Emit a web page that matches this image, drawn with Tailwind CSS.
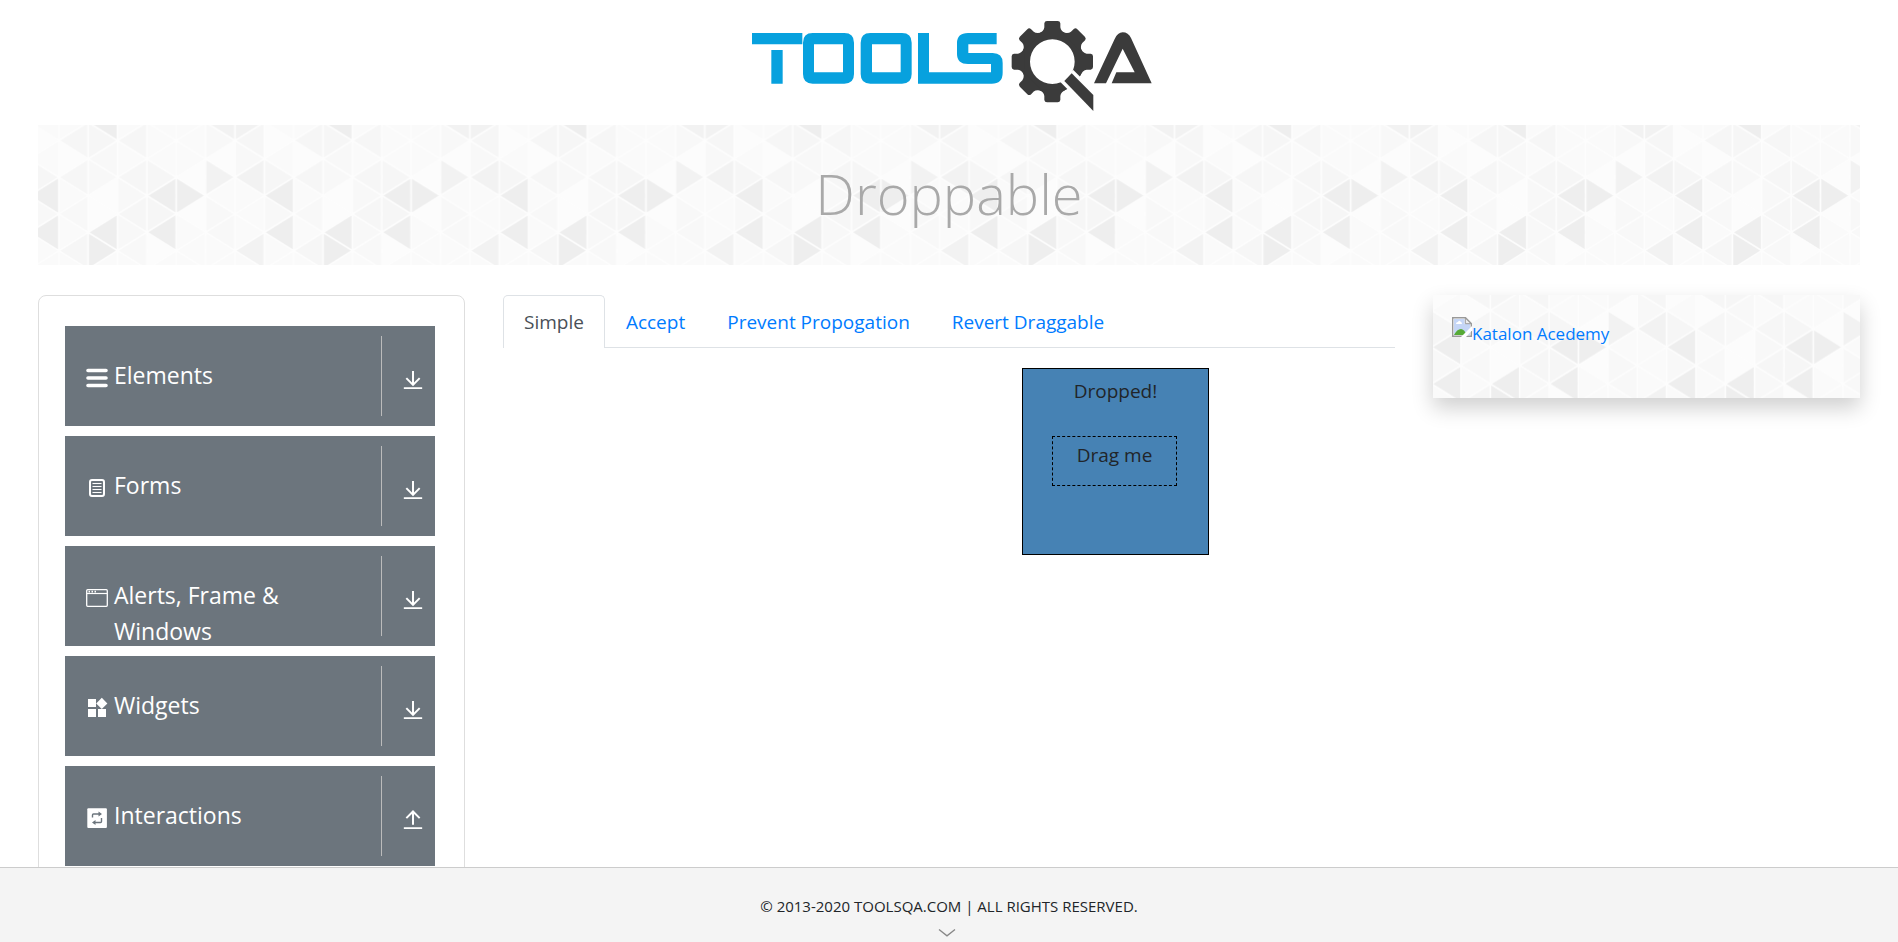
<!DOCTYPE html>
<html lang="en">
<head>
<meta charset="utf-8">
<meta name="viewport" content="width=device-width, initial-scale=1">
<title>ToolsQA</title>
<script src="https://cdn.jsdelivr.net/npm/@tailwindcss/browser@4"></script>
</head>
<body class="flex h-screen flex-col overflow-hidden bg-white font-['Open_Sans',sans-serif] text-[#212529]">

<!-- Shared icon and texture definitions -->
<svg class="absolute size-0" aria-hidden="true">
  <defs>
    <symbol id="down" viewBox="0 0 24 24"><path d="M12 2.500v16M4 11l8 8 8-8M1 23h22" fill="none" stroke="currentColor" stroke-width="2.400"/></symbol>
    <symbol id="up" viewBox="0 0 24 24"><path d="M12 19V3M4 11l8-8 8 8M1 23h22" fill="none" stroke="currentColor" stroke-width="2.400"/></symbol>
    <pattern id="triangles" patternUnits="userSpaceOnUse" width="234.9" height="146.7" patternTransform="translate(-185.5 -72.7)">
      <g transform="scale(29.3625 18.3375)">
        <rect width="8" height="8" fill="#fafafa"/>
        <path fill="#eeeeee" d="M2 7L1 6V8zM1 0L2 -1V1zM1 6L2 5V7zM3 4L4 3V5zM3 6L4 5V7zM5 4L4 3V5zM7 4L8 3V5zM7 6L8 5V7z"/>
        <path fill="#f2f2f2" d="M6 3L5 2V4zM6 3L7 2V4zM6 7L7 6V8zM5 0L6 -1V1zM7 0L6 -1V1z"/>
        <path fill="#f6f6f6" d="M0 1L1 0V2zM0 3L1 2V4zM0 7L1 6V8zM2 1L1 0V2zM2 1L3 0V2zM2 3L3 2V4zM2 5L3 4V6zM4 3L3 2V4zM4 5L3 4V6zM6 1L7 0V2zM8 3L7 2V4z"/>
        <path fill="#f8f8f8" d="M0 5L1 4V6zM2 3L1 2V4zM1 2L2 1V3zM2 7L3 6V8zM3 4L2 3V5zM3 6L2 5V7zM6 1L5 0V2zM6 5L5 4V6zM7 2L6 1V3zM8 5L7 4V6zM5 6L6 5V7z"/>
        <path fill="#fcfcfc" d="M1 4L2 3V5zM2 5L1 4V6zM1 2L0 1V3zM4 7L3 6V8zM4 3L5 2V4zM4 5L5 4V6zM8 1L7 0V2zM5 2L6 1V3z"/>
      </g>
      <path fill="none" stroke="#fdfdfd" stroke-width="1.700" d="M0 0V147M29.400 0V147M58.700 0V147M88.100 0V147M117.400 0V147M146.800 0V147M176.200 0V147M205.500 0V147M234.900 0V147M0 -128.400L234.900 18.300M0 -91.700L234.900 55M0 -55L234.900 91.700M0 -18.300L234.900 128.400M0 18.300L234.900 165M0 55L234.900 201.700M0 91.700L234.900 238.400M0 128.400L234.900 275.100M234.900 -128.400L0 18.300M234.900 -91.700L0 55M234.900 -55L0 91.700M234.900 -18.300L0 128.400M234.900 18.300L0 165M234.900 55L0 201.700M234.900 91.700L0 238.400M234.900 128.400L0 275.100"/>
    </pattern>
  </defs>
</svg>

<main class="min-h-0 flex-1 overflow-hidden">
  <header class="flex justify-center pt-[10px] pl-[2px]">
    <a href="#" aria-label="ToolsQA home">
      <svg class="h-[110px] w-[420px]" viewBox="0 0 1260 330" role="img" aria-label="ToolsQA">
        <g fill="#07a1de">
          <path d="M36 69H187V103H36zM94 120H128V221H94z"/>
          <path fill-rule="evenodd" d="M218 69H313Q342 69 342 98V192Q342 221 313 221H218Q189 221 189 192V98Q189 69 218 69zM222 103V187H309V103z"/>
          <path fill-rule="evenodd" d="M391 69H486Q515 69 515 98V192Q515 221 486 221H391Q362 221 362 192V98Q362 69 391 69zM396 103V187H482V103z"/>
          <path d="M534 69H567V187H753V162H684Q651 162 651 132V99Q651 69 684 69H770V103H685V129H758Q788 129 788 159V188Q788 221 755 221H534z"/>
        </g>
        <g fill="#3b3b3b">
          <path fill-rule="evenodd" d="M937 61A94 94 0 1 0 937 249A94 94 0 1 0 937 61zM937 88A67 67 0 1 1 937 222A67 67 0 1 1 937 88z"/>
          <path id="tooth" d="M894 72Q912 64 913 52V40Q914 33 921 33H953Q960 33 961 40V52Q962 64 980 72z"/>
          <use href="#tooth" transform="rotate(45 937 155)"/>
          <use href="#tooth" transform="rotate(90 937 155)"/>
          <use href="#tooth" transform="rotate(180 937 155)"/>
          <use href="#tooth" transform="rotate(225 937 155)"/>
          <use href="#tooth" transform="rotate(270 937 155)"/>
          <use href="#tooth" transform="rotate(315 937 155)"/>
          <path fill="#fff" d="M1000 180L1075 255V330L955 210L962 213z"/>
          <path d="M995 190L1060 255V303L973 213z"/>
          <path d="M1062 220L1124 87Q1133 67 1148 67Q1165 67 1173 84L1235 220H1115L1129 187H1184L1148 116L1098 220z"/>
        </g>
      </svg>
    </a>
  </header>

  <div class="px-[38px] pt-[5px]">
    <div class="relative flex h-[140px] justify-center overflow-hidden pt-[33px]">
      <svg class="absolute inset-0 size-full" aria-hidden="true"><svg x="50%" y="50%" class="overflow-visible"><rect x="-2000" y="-70" width="4000" height="140" fill="url(#triangles)"/></svg></svg>
      <h1 class="relative text-[56px] leading-[70px] font-light text-[#a9a9a9]">Droppable</h1>
    </div>

    <div class="mt-[30px] grid grid-cols-4 items-start gap-[38px]">
      <nav class="flex h-[800px] flex-col gap-[10px] rounded-lg border border-[#dedede] pt-[30px] pr-[29px] pl-[26px]" aria-label="Sections">
        <button type="button" class="flex h-[100px] shrink-0 overflow-hidden bg-[#6c757d] py-[10px] pl-[21px] text-left text-[23px] leading-9 text-white">
          <svg class="mt-[31px] mr-[5px] size-[23px] shrink-0" viewBox="0 0 23 23" stroke="currentColor" stroke-width="3.600" stroke-linecap="round"><path d="M2 3.500H20M2 11H20M2 18.500H20"/></svg>
          <span class="mt-[21px] flex-1">Elements</span>
          <span class="flex h-20 w-[54px] items-start border-l border-[#bbb] pt-[33px] pl-[21px]"><svg class="size-[20px] shrink-0"><use href="#down"/></svg></span>
        </button>
        <button type="button" class="flex h-[100px] shrink-0 overflow-hidden bg-[#6c757d] py-[10px] pl-[21px] text-left text-[23px] leading-9 text-white">
          <svg class="mt-[31px] mr-[5px] size-[23px] shrink-0" viewBox="0 0 23 23" fill="none" stroke="currentColor"><rect x="4" y="3" width="14" height="16" rx="2" stroke-width="2"/><path d="M6.500 6.500H15.500M6.500 9.500H15.500M6.500 12.500H15.500M6.500 15.500H15.500"/></svg>
          <span class="mt-[21px] flex-1">Forms</span>
          <span class="flex h-20 w-[54px] items-start border-l border-[#bbb] pt-[33px] pl-[21px]"><svg class="size-[20px] shrink-0"><use href="#down"/></svg></span>
        </button>
        <button type="button" class="flex h-[100px] shrink-0 overflow-hidden bg-[#6c757d] py-[10px] pl-[21px] text-left text-[23px] leading-9 text-white">
          <svg class="mt-[31px] mr-[5px] size-[23px] shrink-0" viewBox="0 0 23 23" fill="none" stroke="currentColor"><rect x="0.700" y="2.700" width="20.600" height="16.600" rx="1" stroke-width="1.300"/><path d="M1 6.500H21" stroke-width="1.200"/><path d="M2.500 4.600H4M5.500 4.600H7M8.500 4.600H10" stroke-width="1.600"/></svg>
          <span class="mt-[21px] flex-1">Alerts, Frame &amp; <br>Windows</span>
          <span class="flex h-20 w-[54px] items-start border-l border-[#bbb] pt-[33px] pl-[21px]"><svg class="size-[20px] shrink-0"><use href="#down"/></svg></span>
        </button>
        <button type="button" class="flex h-[100px] shrink-0 overflow-hidden bg-[#6c757d] py-[10px] pl-[21px] text-left text-[23px] leading-9 text-white">
          <svg class="mt-[31px] mr-[5px] size-[23px] shrink-0" viewBox="0 0 23 23" fill="currentColor"><path d="M2 2H10V10H2zM2 12H10V20H2zM12 12H20V20H12zM15.800 0.800L21.400 6.400L15.800 12L10.200 6.400z"/></svg>
          <span class="mt-[21px] flex-1">Widgets</span>
          <span class="flex h-20 w-[54px] items-start border-l border-[#bbb] pt-[33px] pl-[21px]"><svg class="size-[20px] shrink-0"><use href="#down"/></svg></span>
        </button>
        <button type="button" class="flex h-[100px] shrink-0 overflow-hidden bg-[#6c757d] py-[10px] pl-[21px] text-left text-[23px] leading-9 text-white">
          <svg class="mt-[31px] mr-[5px] size-[23px] shrink-0" viewBox="0 0 23 23"><rect x="1.300" y="1.300" width="19.600" height="19.600" rx="1" fill="currentColor"/><path d="M6.500 10.500V8Q6.500 7 7.500 7H13M15.500 11V14.500Q15.500 15.500 14.500 15.500H9" fill="none" stroke="#6c757d" stroke-width="1.400"/><path d="M12.500 4.500L16 7L12.500 9.500zM9.500 13L6 15.500L9.500 18z" fill="#6c757d"/></svg>
          <span class="mt-[21px] flex-1">Interactions</span>
          <span class="flex h-20 w-[54px] items-start border-l border-[#bbb] pt-[33px] pl-[21px]"><svg class="size-[20px] shrink-0"><use href="#up"/></svg></span>
        </button>
      </nav>

      <section class="col-span-2">
        <nav class="flex h-[53px] border-b border-[#dee2e6] text-[19px] leading-[30px]" aria-label="Examples">
          <a href="#simple" aria-current="page" class="-mb-px h-[53px] rounded-t-[5px] border border-b-0 border-[#dee2e6] bg-white px-5 pt-[11px] text-[#495057]">Simple</a>
          <a href="#accept" class="px-[21px] pt-3 text-[#007bff]">Accept</a>
          <a href="#prevent" class="px-[21px] pt-3 text-[#007bff]">Prevent Propogation</a>
          <a href="#revert" class="px-[21px] pt-3 text-[#007bff]">Revert Draggable</a>
        </nav>
        <div class="mt-5 flex justify-end pr-[186px] text-center text-[19px] leading-[28px]">
          <div class="size-[187px] border border-black bg-[#4682b4]">
            <p class="mt-2">Dropped!</p>
            <div class="mt-[31px] ml-[29px] h-[50px] w-[125px] border border-dashed border-black pt-1">Drag me</div>
          </div>
        </div>
      </section>

      <aside class="relative h-[103px] shadow-[0_10px_20px_rgba(0,0,0,0.19)]">
        <svg class="absolute inset-0 size-full overflow-hidden" aria-hidden="true"><svg x="50%" y="50%" class="overflow-visible"><rect x="-2000" y="-70" width="4000" height="140" fill="url(#triangles)"/></svg></svg>
        <a href="#katalon" class="relative flex pt-[22px] pl-[19px] text-[17px] leading-[34px] text-[#007bff]">
          <svg class="size-5 shrink-0" viewBox="0 0 20 20" aria-hidden="true"><path d="M.7.700H13.500L19.300 6.500V19.300H.7z" fill="#fff" stroke="#999" stroke-width="1.400"/><path d="M2 2H12.500V7H18V18H2z" fill="#c5d6f6"/><path d="M4 7Q4 5 6 5Q7 3 8.500 4.500Q10 5 10 7z" fill="#fff"/><path d="M2 18Q5 12 9 12Q12 12 15 18z" fill="#56aa36"/><path d="M13.300 1V6.700H19z" fill="#eee" stroke="#999"/><path d="M9 20L20 9V13.500L14 20z" fill="#fff"/></svg>
          <span>Katalon Acedemy</span>
        </a>
      </aside>
    </div>
  </div>
</main>

<footer class="flex h-[75px] shrink-0 flex-col items-center border-t border-[#ccc] bg-[#f4f4f4] pt-[26px] text-[15px] leading-6">
  <span>© 2013-2020 TOOLSQA.COM | ALL RIGHTS RESERVED.</span>
  <svg class="mt-[11px] mr-1 h-2 w-[18px]" viewBox="0 0 18 8" fill="none" stroke="#888" stroke-width="1.300" aria-hidden="true"><path d="M1 .5L9 6.800L17 .5"/></svg>
</footer>
</body>
</html>
